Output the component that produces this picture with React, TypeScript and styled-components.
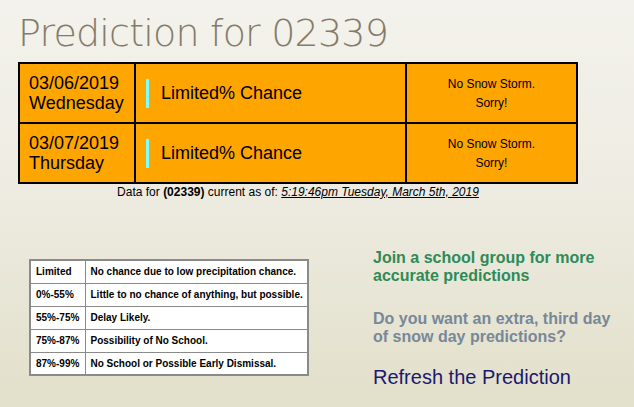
import React from "react";
import styled, { createGlobalStyle } from "styled-components";

const Global = createGlobalStyle`
  html, body { margin: 0; padding: 0; }
  body {
    min-height: 407px;
    background: linear-gradient(to bottom, #f3f2ec 0%, #eeece2 45%, #e2dfca 100%);
    font-family: "Liberation Sans", Arial, sans-serif;
  }
`;

const Page = styled.div`
  width: 634px;
  height: 407px;
  padding: 0 0 0 18px;
  box-sizing: border-box;
  overflow: hidden;
`;

const Title = styled.h1`
  margin: 0;
  padding-top: 10px;
  height: 62px;
  box-sizing: border-box;
  font-family: "DejaVu Sans", sans-serif;
  font-weight: 200;
  font-size: 38px;
  line-height: 46px;
  color: #857b6a;
  letter-spacing: -0.8px;
`;

const ForecastTable = styled.table`
  width: 560px;
  border-collapse: collapse;
  background: #ffa500;
  border: 2px solid #000;
`;

const Cell = styled.td<{ $w: number; $center?: boolean }>`
  width: ${(p) => p.$w}px;
  height: 60px;
  border: 2px solid #000;
  padding: 0 0 0 9px;
  box-sizing: border-box;
  vertical-align: middle;
  text-align: ${(p) => (p.$center ? "center" : "left")};
  ${(p) => (p.$center ? "padding: 0;" : "")}
`;

const DateText = styled.div`
  font-size: 18px;
  line-height: 20px;
  color: #000;
`;

const Chance = styled.div`
  margin-left: 1px;
  border-left: 3px solid #80ffff;
  padding-left: 12px;
  font-size: 18px;
  line-height: 29px;
  color: #000;
`;

const Storm = styled.div`
  font-size: 12px;
  line-height: 19px;
  color: #000;
  padding-top: 1px;
`;

const DataLine = styled.div`
  width: 560px;
  text-align: center;
  font-size: 12px;
  line-height: 16px;
  color: #000;
  b { font-weight: bold; }
`;

const Stamp = styled.span`
  font-style: italic;
  text-decoration: underline;
`;

const Bottom = styled.div`
  display: flex;
  align-items: flex-start;
  margin-top: 48px;
`;

const Legend = styled.table`
  margin: 11px 0 0 11px;
  width: 280px;
  border-collapse: collapse;
  background: #fff;
  border: 2px solid #8a8a8a;
`;

const LCell = styled.td<{ $w?: number }>`
  ${(p) => (p.$w ? `width: ${p.$w}px;` : "")}
  height: 23px;
  box-sizing: border-box;
  border: 1px solid #8a8a8a;
  padding: 0 0 0 5px;
  font-size: 10px;
  font-weight: bold;
  color: #000;
  white-space: nowrap;
`;

const Side = styled.div`
  margin-left: 64px;
  padding-top: 1px;
  display: flex;
  flex-direction: column;
`;

const Promo = styled.div<{ $color: string }>`
  font-size: 16px;
  font-weight: bold;
  line-height: 18px;
  color: ${(p) => p.$color};
  margin-bottom: 25px;
`;

const Refresh = styled.div`
  font-size: 20px;
  line-height: 24px;
  color: #191970;
  margin-top: -6px;
`;

const days = [
  { date: "03/06/2019", day: "Wednesday" },
  { date: "03/07/2019", day: "Thursday" },
];

const legend = [
  ["Limited", "No chance due to low precipitation chance."],
  ["0%-55%", "Little to no chance of anything, but possible."],
  ["55%-75%", "Delay Likely."],
  ["75%-87%", "Possibility of No School."],
  ["87%-99%", "No School or Possible Early Dismissal."],
];

export default function App() {
  return (
    <Page>
      <Global />
      <Title>Prediction for 02339</Title>
      <ForecastTable>
        <tbody>
          {days.map((d) => (
            <tr key={d.date}>
              <Cell $w={116}>
                <DateText>
                  {d.date}
                  <br />
                  {d.day}
                </DateText>
              </Cell>
              <Cell $w={272}>
                <Chance>Limited% Chance</Chance>
              </Cell>
              <Cell $w={172} $center>
                <Storm>
                  No Snow Storm.
                  <br />
                  Sorry!
                </Storm>
              </Cell>
            </tr>
          ))}
        </tbody>
      </ForecastTable>
      <DataLine>
        Data for <b>(02339)</b> current as of:{" "}
        <Stamp>5:19:46pm Tuesday, March 5th, 2019</Stamp>
      </DataLine>
      <Bottom>
        <Legend>
          <tbody>
            {legend.map(([k, v]) => (
              <tr key={k}>
                <LCell $w={55}>{k}</LCell>
                <LCell>{v}</LCell>
              </tr>
            ))}
          </tbody>
        </Legend>
        <Side>
          <Promo $color="#2e8b57">
            Join a school group for more
            <br />
            accurate predictions
          </Promo>
          <Promo $color="#778899">
            Do you want an extra, third day
            <br />
            of snow day predictions?
          </Promo>
          <Refresh>Refresh the Prediction</Refresh>
        </Side>
      </Bottom>
    </Page>
  );
}
